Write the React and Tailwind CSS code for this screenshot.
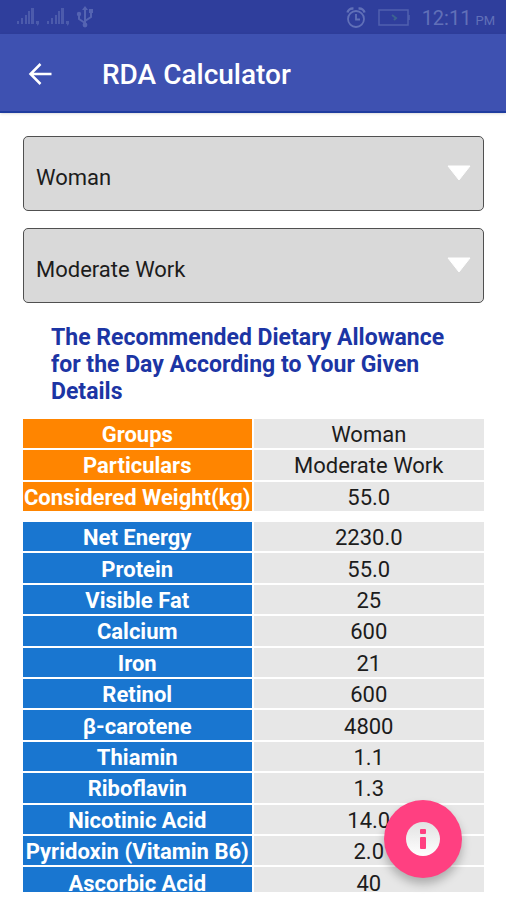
import React, { useState } from "react";

const groups = ["Man", "Woman", "Infants", "Children", "Boys", "Girls"];
const workTypes = ["Sedentary Work", "Moderate Work", "Heavy Work"];

const nutrients = [
    { name: "Net Energy", value: "2230.0" },
    { name: "Protein", value: "55.0" },
    { name: "Visible Fat", value: "25" },
    { name: "Calcium", value: "600" },
    { name: "Iron", value: "21" },
    { name: "Retinol", value: "600" },
    { name: "β-carotene", value: "4800" },
    { name: "Thiamin", value: "1.1" },
    { name: "Riboflavin", value: "1.3" },
    { name: "Nicotinic Acid", value: "14.0" },
    { name: "Pyridoxin (Vitamin B6)", value: "2.0" },
    { name: "Ascorbic Acid", value: "40" },
];

const SignalIcon = () => (
    <svg width="24" height="20" viewBox="0 0 24 20" fill="#4c5bac" aria-hidden="true">
        <rect x="1" y="14" width="2" height="3" />
        <rect x="5" y="11" width="2" height="6" />
        <rect x="9" y="8" width="2" height="9" />
        <rect x="12" y="4" width="2" height="13" />
        <rect x="15" y="1" width="3" height="16" />
        <path d="M20 14h3v3l-2 2v-2h-1z" />
    </svg>
);

const UsbIcon = () => (
    <svg width="18" height="22" viewBox="0 0 18 22" fill="none" stroke="#5564b2" strokeWidth="2" aria-hidden="true">
        <path d="M9 3v16M9 17L3 13V7M9 15l6-4V5" />
        <path d="M9 0l3 4H6z" fill="#5564b2" stroke="none" />
        <circle cx="9" cy="19" r="2.4" fill="#5564b2" stroke="none" />
        <circle cx="3" cy="8" r="2.2" fill="#5564b2" stroke="none" />
        <rect x="13" y="3" width="4" height="4" fill="#5564b2" stroke="none" />
    </svg>
);

const AlarmIcon = () => (
    <svg width="20" height="21" viewBox="0 0 20 21" fill="none" stroke="currentColor" strokeWidth="1.8" aria-hidden="true">
        <circle cx="10" cy="12" r="8" />
        <path d="M10 7v5.5h4" />
        <path d="M1.5 5.5C2 3 4.5 1.2 7.5 1.6M18.5 5.5C18 3 15.5 1.2 12.5 1.6" strokeWidth="2.4" />
    </svg>
);

const BatteryIcon = () => (
    <svg width="32" height="17" viewBox="0 0 32 17" fill="none" stroke="#5160af" aria-hidden="true">
        <rect x="1" y="1" width="29" height="15" strokeWidth="1.5" />
        <path d="M31 6v5" strokeWidth="1.5" />
        <path d="M14 6l4 3-2 2" stroke="#3d6390" strokeWidth="2" />
    </svg>
);

const SelectBox = ({ label, options, value, onChange }) => (
    <div className="relative">
        <select
            aria-label={label}
            value={value}
            onChange={(e) => onChange(e.target.value)}
            className="block w-full h-[75px] appearance-none rounded-[5px] border border-[#505050] bg-[#d9d9d9] pl-3 pr-12 pt-2 text-[22px] text-[#1c1c1c] outline-none"
        >
            {options.map((opt) => (
                <option key={opt}>{opt}</option>
            ))}
        </select>
        <svg
            className="pointer-events-none absolute right-3 top-[29px]"
            width="26"
            height="17"
            viewBox="0 0 26 17"
            fill="white"
            aria-hidden="true"
        >
            <path d="M2 1h22L13 15z" stroke="white" strokeLinejoin="round" />
        </svg>
    </div>
);

const Row = ({ name, value, color }) => (
    <tr>
        <th scope="row" className={`border-b-2 border-r-2 border-white bg-clip-padding p-0 pt-[3px] font-bold text-white whitespace-nowrap ${color}`}>
            {name}
        </th>
        <td className="border-b-2 border-white bg-[#e7e7e7] bg-clip-padding p-0 pt-[3px] text-[#1c1c1c]">{value}</td>
    </tr>
);

const App = () => {
    const [group, setGroup] = useState("Woman");
    const [work, setWork] = useState("Moderate Work");

    return (
        <div className="relative flex h-screen flex-col bg-white pb-2 font-['Roboto',sans-serif]">
            {/* Status bar */}
            <div className="flex h-[34px] shrink-0 items-center bg-[#2f3e9c] pl-4 pr-[11px] text-[#6170b8]">
                <div className="flex items-center gap-[6px]">
                    <SignalIcon />
                    <SignalIcon />
                    <UsbIcon />
                </div>
                <div className="ml-auto flex items-center">
                    <AlarmIcon />
                    <span className="mx-3">
                        <BatteryIcon />
                    </span>
                    <span className="flex items-baseline gap-1 pt-1 text-[20px] leading-6">
                        12:11 <span className="text-[13px]">PM</span>
                    </span>
                </div>
            </div>

            {/* Toolbar */}
            <header className="z-10 flex h-[79px] shrink-0 items-center border-b-2 border-[#1f3c9f] bg-[#3e51b1] pl-7 pt-1 text-white shadow-sm">
                <button type="button" aria-label="Back" className="flex w-[74px] items-center">
                    <svg width="24" height="24" viewBox="0 0 24 24" fill="none" stroke="currentColor" strokeWidth="2.5" aria-hidden="true">
                        <path d="M23.5 11H3M12.500 1L2.500 11L12.500 21" />
                    </svg>
                </button>
                <h1 className="text-[28px] font-medium leading-8">RDA Calculator</h1>
            </header>

            <main className="min-h-0 flex-1 overflow-y-auto pl-[23px] pr-[22px] pt-[23px] [scrollbar-width:none]">
                <div className="flex flex-col gap-[17px]">
                    <SelectBox label="Group" options={groups} value={group} onChange={setGroup} />
                    <SelectBox label="Type of work" options={workTypes} value={work} onChange={setWork} />
                </div>

                <h2 className="mt-[21px] px-7 text-[23px] font-bold leading-[27px] text-[#1c35a4]">
                    The Recommended Dietary Allowance for the Day According to Your Given Details
                </h2>

                <table className="mt-[14px] h-[94px] w-full table-fixed border-separate border-spacing-0 text-center text-[22px] leading-[26px]">
                    <tbody>
                        <Row name="Groups" value={group} color="bg-[#ff8500]" />
                        <Row name="Particulars" value={work} color="bg-[#ff8500]" />
                        <Row name="Considered Weight(kg)" value="55.0" color="bg-[#ff8500]" />
                    </tbody>
                </table>

                <table className="mt-[9px] h-[377px] w-full table-fixed border-separate border-spacing-0 text-center text-[22px] leading-[26px]">
                    <tbody>
                        {nutrients.map((n) => (
                            <Row key={n.name} name={n.name} value={n.value} color="bg-[#1976d0]" />
                        ))}
                    </tbody>
                </table>
            </main>

            {/* Info button */}
            <button
                type="button"
                aria-label="Info"
                className="absolute bottom-[22px] right-11 z-20 flex h-[78px] w-[78px] items-center justify-center rounded-full bg-[#ff4081] shadow-[0_6px_10px_rgba(0,0,0,0.25)]"
            >
                <svg width="36" height="36" viewBox="0 0 36 36" aria-hidden="true">
                    <defs>
                        <linearGradient id="disc" x1="0" y1="0" x2="0" y2="1">
                            <stop offset="0" stopColor="#e2e2e2" />
                            <stop offset="1" stopColor="#ffffff" />
                        </linearGradient>
                    </defs>
                    <circle cx="18" cy="18" r="17" fill="url(#disc)" />
                    <rect x="15" y="8" width="6" height="5" rx="1" fill="#ff4081" />
                    <rect x="15" y="16" width="6" height="12" rx="1" fill="#ff4081" />
                </svg>
            </button>
        </div>
    );
};

export default App;
